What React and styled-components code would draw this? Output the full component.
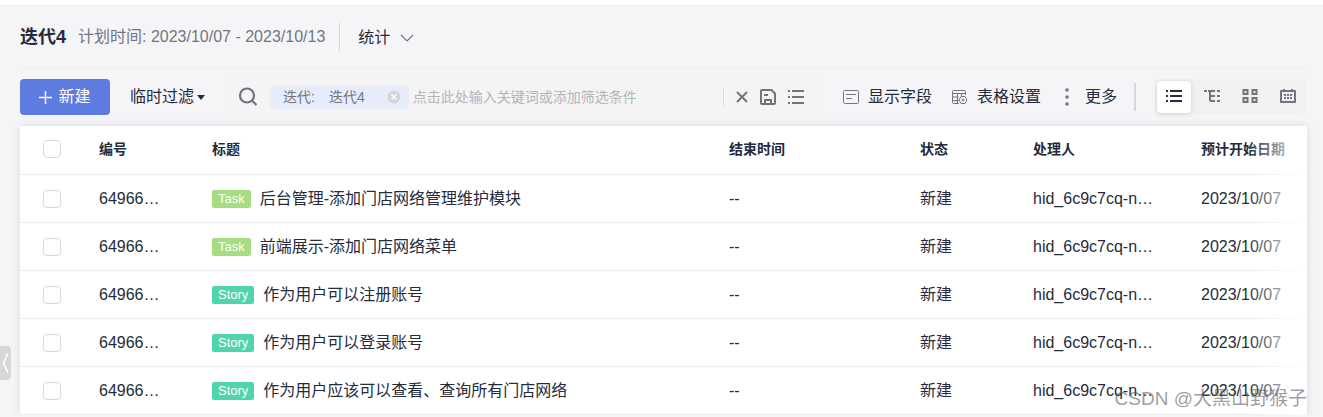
import React, { useState } from 'react'
import styled, { createGlobalStyle } from 'styled-components'

const rows = [
  { id: 1, code: '64966…', type: 'Task', title: '后台管理-添加门店网络管理维护模块' },
  { id: 2, code: '64966…', type: 'Task', title: '前端展示-添加门店网络菜单' },
  { id: 3, code: '64966…', type: 'Story', title: '作为用户可以注册账号' },
  { id: 4, code: '64966…', type: 'Story', title: '作为用户可以登录账号' },
  { id: 5, code: '64966…', type: 'Story', title: '作为用户应该可以查看、查询所有门店网络' },
]

const views = [
  { name: 'list', label: '列表', icon: <ListIcon /> },
  { name: 'tree', label: '树形', icon: <TreeIcon /> },
  { name: 'board', label: '看板', icon: <BoardIcon /> },
  { name: 'calendar', label: '日历', icon: <CalendarIcon /> },
]

function ListIcon() {
  return (
    <svg width="16" height="16" viewBox="0 0 16 16" fill="currentColor" aria-hidden="true">
      <path d="M0 1h2v2H0zM4 1h12v2H4zM0 6h2v2H0zM4 6h12v2H4zM0 11h2v2H0zM4 11h12v2H4z" />
    </svg>
  )
}

function TreeIcon() {
  return (
    <svg width="16" height="16" viewBox="0 0 16 16" fill="currentColor" aria-hidden="true">
      <path d="M0 1h3v2H0zM4 1h7v2H4zM13 1h3v2h-3zM5 3h2v8h4v2H7a2 2 0 0 1-2-2zM7 6h4v2H7zM13 6h3v2h-3zM13 11h3v2h-3z" />
    </svg>
  )
}

function BoardIcon() {
  return (
    <svg width="16" height="16" viewBox="0 0 16 16" fill="none" stroke="currentColor" strokeWidth="2" aria-hidden="true">
      <path d="M1.500 1h4v4h-4zM10.500 1h4v4h-4zM1.500 9h4v4h-4zM10.500 9h4v4h-4z" />
    </svg>
  )
}

function CalendarIcon() {
  return (
    <svg width="18" height="16" viewBox="0 0 18 16" aria-hidden="true">
      <path d="M2 2h14v11H2z" fill="none" stroke="currentColor" strokeWidth="2" strokeLinejoin="round" />
      <path d="M4 0h2v3H4zM12 0h2v3h-2zM5 5h2v2H5zM8 5h2v2H8zM11 5h2v2h-2zM5 8h2v2H5zM8 8h2v2H8zM11 8h2v2h-2z" fill="currentColor" />
    </svg>
  )
}

function App() {
  const [view, setView] = useState('list')
  const [keyword, setKeyword] = useState('')

  return (
    <Page>
      <GlobalStyle />
      <TopStrip />
      <Content>
        <Header>
          <Title>迭代4</Title>
          <Plan>计划时间: 2023/10/07 - 2023/10/13</Plan>
          <StatButton type="button">
            统计
            <svg width="14" height="8" viewBox="0 0 14 8" fill="none" stroke="#71757f" strokeWidth="1.2" aria-hidden="true">
              <path d="M1 1l6 6 6-6" />
            </svg>
          </StatButton>
        </Header>

        <Toolbar>
          <NewButton type="button">
            <svg width="13" height="13" viewBox="0 0 13 13" stroke="currentColor" strokeWidth="1.4" aria-hidden="true">
              <path d="M6.500 0v13M0 6.500h13" />
            </svg>
            新建
          </NewButton>
          <FilterButton type="button">
            临时过滤
            <svg width="8" height="5" viewBox="0 0 8 5" fill="currentColor" aria-hidden="true">
              <path d="M0 0h8L4 5z" />
            </svg>
          </FilterButton>

          <Search>
            <svg width="20" height="20" viewBox="0 0 20 20" fill="none" stroke="#71757f" strokeWidth="2.2" aria-hidden="true">
              <circle cx="9" cy="8.500" r="7" />
              <path d="M14 13.500l4.500 4.500" />
            </svg>
            <Chip>
              <span>迭代:</span>
              <span>迭代4</span>
              <ChipClose type="button" aria-label="移除">
                <svg width="14" height="14" viewBox="0 0 14 14" aria-hidden="true">
                  <circle cx="7" cy="7" r="6.500" fill="#d3d5d9" />
                  <path d="M4.500 4.500l5 5M9.500 4.500l-5 5" stroke="#fff" strokeWidth="1.300" />
                </svg>
              </ChipClose>
            </Chip>
            <SearchInput
              aria-label="搜索"
              placeholder="点击此处输入关键词或添加筛选条件"
              value={keyword}
              onChange={(e) => setKeyword(e.target.value)}
            />
            <SearchActions>
              <IconButton type="button" aria-label="清空" onClick={() => setKeyword('')}>
                <svg width="12" height="12" viewBox="0 0 12 12" stroke="currentColor" strokeWidth="2" aria-hidden="true">
                  <path d="M1 1l10 10M11 1L1 11" />
                </svg>
              </IconButton>
              <IconButton type="button" aria-label="保存">
                <svg width="16" height="16" viewBox="0 0 16 16" fill="none" stroke="currentColor" strokeWidth="2" aria-hidden="true">
                  <path d="M2 1h9.500L15 4.500V14a1 1 0 0 1-1 1H2a1 1 0 0 1-1-1V2a1 1 0 0 1 1-1z" />
                  <path d="M5 15v-4h6v4M4 6h4" />
                </svg>
              </IconButton>
              <IconButton type="button" aria-label="过滤器列表">
                <svg width="16" height="14" viewBox="0 0 16 14" fill="currentColor" aria-hidden="true">
                  <path d="M0 0h2v2H0zM4 0h12v2H4zM0 6h2v2H0zM4 6h12v2H4zM0 12h2v2H0zM4 12h12v2H4z" />
                </svg>
              </IconButton>
            </SearchActions>
          </Search>

          <Tools>
            <ToolButton type="button">
              <svg width="16" height="16" viewBox="0 0 16 16" fill="none" stroke="#71757f" aria-hidden="true">
                <rect x="0.500" y="1.500" width="15" height="13" rx="1" />
                <path d="M3 5.500h10M3 9.500h6" />
              </svg>
              显示字段
            </ToolButton>
            <ToolButton type="button">
              <svg width="16" height="16" viewBox="0 0 16 16" fill="none" stroke="#71757f" aria-hidden="true">
                <path d="M7 14.500H1.500a1 1 0 0 1-1-1v-11a1 1 0 0 1 1-1h11a1 1 0 0 1 1 1V6M0.500 4.500h13M0.500 8h6M0.500 11.500h6M5.500 4.500v10M9.500 4.500V7" />
                <path d="M9 7.500h4l2 3.500-2 3.500H9L7 11z" />
                <circle cx="11" cy="11" r="1" />
              </svg>
              表格设置
            </ToolButton>
            <MoreButton type="button">
              <svg width="4" height="18" viewBox="0 0 4 18" fill="#71757f" aria-hidden="true">
                <circle cx="2" cy="2" r="1.800" />
                <circle cx="2" cy="9" r="1.800" />
                <circle cx="2" cy="16" r="1.800" />
              </svg>
              更多
            </MoreButton>
          </Tools>

          <Views>
            {views.map((v) => (
              <ViewButton key={v.name} type="button" aria-label={v.label} $active={view === v.name} onClick={() => setView(v.name)}>
                {v.icon}
              </ViewButton>
            ))}
          </Views>
        </Toolbar>

        <Card>
          <Table>
            <colgroup>
              <Col $w={71} />
              <Col $w={113} />
              <Col />
              <Col $w={191} />
              <Col $w={113} />
              <Col $w={168} />
              <Col $w={114} />
            </colgroup>
            <thead>
              <tr>
                <CheckHead><Checkbox type="checkbox" aria-label="全选" /></CheckHead>
                <Th>编号</Th>
                <Th>标题</Th>
                <Th>结束时间</Th>
                <Th>状态</Th>
                <Th>处理人</Th>
                <Th>预计开始日期</Th>
              </tr>
            </thead>
            <tbody>
              {rows.map((row) => (
                <tr key={row.id}>
                  <CheckCell><Checkbox type="checkbox" aria-label={row.title} /></CheckCell>
                  <Td>{row.code}</Td>
                  <Td>
                    <TitleCell>
                      <Badge $type={row.type}>{row.type}</Badge>
                      {row.title}
                    </TitleCell>
                  </Td>
                  <Td>--</Td>
                  <Td>新建</Td>
                  <Td>hid_6c9c7cq-n…</Td>
                  <Td>2023/10/07</Td>
                </tr>
              ))}
            </tbody>
          </Table>
          <Fade />
          <Watermark>CSDN @大黑山野猴子</Watermark>
        </Card>
      </Content>

      <Collapse type="button" aria-label="展开侧栏">
        <svg width="7" height="22" viewBox="0 0 7 22" fill="none" stroke="#fff" strokeWidth="1.600" aria-hidden="true">
          <path d="M6 1L1.500 11 6 21" />
        </svg>
      </Collapse>
    </Page>
  )
}

const GlobalStyle = createGlobalStyle`
*{
    box-sizing: border-box;
}
body{
    margin: 0;
    background: #f5f5f8;
    color: #252b3a;
    font-family: "Liberation Sans", "Noto Sans CJK SC", sans-serif;
    font-size: 16px;
    line-height: 24px;
}
button, input{
    font: inherit;
    color: inherit;
}
button{
    display: flex;
    align-items: center;
    padding: 0;
    border: none;
    background: none;
    white-space: nowrap;
    cursor: pointer;
}
svg{
    display: block;
    flex: none;
}
`;
const Page = styled.div`
position: relative;
`;
const TopStrip = styled.div`
height: 6px;
background: #fff;
border-bottom: 1px solid #ebebed;
`;
const Content = styled.main`
padding: 0 16px 0 20px;
`;
const Header = styled.header`
display: flex;
align-items: center;
height: 62px;
border-bottom: 1px solid #ededf0;
margin-bottom: 11px;
`;
const Title = styled.h1`
margin: 0 12px 0 0;
font-size: 18px;
`;
const Plan = styled.span`
color: #71757f;
margin-right: 14px;
`;
const StatButton = styled.button`
height: 28px;
padding: 2px 0 0 18px;
gap: 10px;
border-left: 1px solid #d5d6da;
`;
const Toolbar = styled.div`
display: flex;
align-items: center;
height: 36px;
margin-bottom: 11px;
`;
const NewButton = styled.button`
justify-content: center;
gap: 6px;
width: 90px;
height: 36px;
border-radius: 4px;
background: #5e7ce0;
color: #fff;
`;
const FilterButton = styled.button`
gap: 3px;
margin: 0 23px 0 20px;
`;
const Search = styled.div`
display: flex;
align-items: center;
flex: 1;
min-width: 0;
height: 36px;
padding: 0 19px 0 10px;
border-radius: 4px;
background: #f4f4f4;
`;
const Chip = styled.span`
display: flex;
align-items: center;
flex: none;
gap: 14px;
height: 24px;
margin: 0 4px 0 12px;
padding: 0 8px 0 13px;
border-radius: 4px;
background: #e8ecfa;
color: #71757f;
font-size: 14px;
`;
const ChipClose = styled.button`
margin-left: 8px;
`;
const SearchInput = styled.input`
flex: 1;
min-width: 0;
padding: 0;
border: none;
outline: none;
background: none;
font-size: 14px;
&::placeholder{
    color: #b4b5b9;
}
`;
const SearchActions = styled.div`
display: flex;
align-items: center;
gap: 12px;
height: 18px;
padding-left: 12px;
border-left: 1px solid #dcdde0;
`;
const IconButton = styled.button`
color: #71757f;
`;
const Tools = styled.div`
display: flex;
align-items: center;
gap: 20px;
height: 28px;
padding: 0 17px 0 20px;
border-right: 2px solid #d7d8dc;
`;
const ToolButton = styled.button`
gap: 9px;
`;
const MoreButton = styled.button`
gap: 16px;
margin-left: 4px;
`;
const Views = styled.div`
display: flex;
align-items: center;
gap: 4px;
height: 36px;
margin-left: 19px;
padding: 0 2px;
border-radius: 4px;
background: #f1f1f1;
`;
const ViewButton = styled.button`
justify-content: center;
width: 34px;
height: 32px;
border-radius: 4px;
color: ${(p) => (p.$active ? '#252b3a' : '#71757f')};
background: ${(p) => (p.$active ? '#fff' : 'none')};
box-shadow: ${(p) => (p.$active ? '0 1px 5px rgba(37, 43, 58, 0.16)' : 'none')};
`;
const Card = styled.div`
position: relative;
background: #fff;
box-shadow: 0 0 8px rgba(37, 43, 58, 0.12);
`;
const Table = styled.table`
width: 100%;
table-layout: fixed;
border-collapse: separate;
border-spacing: 0;
`;
const Col = styled.col`
width: ${(p) => (p.$w ? p.$w + 'px' : 'auto')};
`;
const Th = styled.th`
height: 49px;
padding: 0 8px 2px;
border-bottom: 1px solid #ebebf0;
font-size: 14px;
text-align: left;
white-space: nowrap;
`;
const Td = styled.td`
height: 48px;
padding: 0 8px;
border-bottom: 1px solid #ebebf0;
white-space: nowrap;
`;
const CheckHead = styled(Th)`
padding-left: 23px;
`;
const CheckCell = styled(Td)`
padding-left: 23px;
`;
const Checkbox = styled.input`
appearance: none;
display: block;
width: 18px;
height: 18px;
margin: 0;
border: 1px solid #d7d8da;
border-radius: 4px;
background: #fff;
&:checked{
    background: #5e7ce0;
}
`;
const TitleCell = styled.div`
display: flex;
align-items: center;
gap: 9px;
`;
const Badge = styled.span`
padding: 0 6px;
border-radius: 2px;
background: ${(p) => (p.$type === 'Task' ? '#a6dd82' : '#50d4ab')};
color: #fff;
font-size: 13px;
line-height: 18px;
`;
const Fade = styled.div`
position: absolute;
top: 0;
right: 0;
bottom: 0;
width: 60px;
background: linear-gradient(to right, rgba(255, 255, 255, 0), #fff);
pointer-events: none;
`;
const Watermark = styled.span`
position: absolute;
right: 0;
bottom: 4px;
color: rgba(90, 90, 95, 0.6);
font-size: 19px;
pointer-events: none;
`;
const Collapse = styled.button`
position: absolute;
left: 0;
bottom: 35px;
justify-content: center;
width: 11px;
height: 34px;
border-radius: 0 4px 4px 0;
background: #d6d7d9;
`;
export default App
